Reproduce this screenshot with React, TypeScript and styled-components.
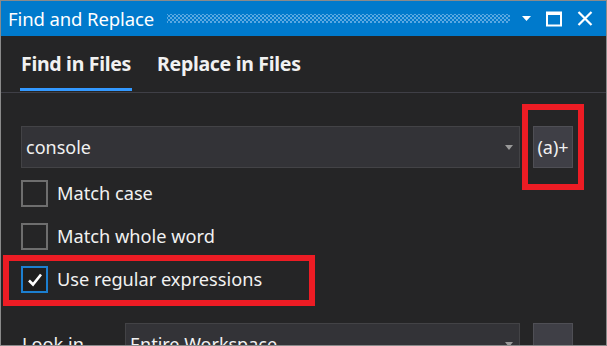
import React from "react"
import styled, { createGlobalStyle } from "styled-components"

const GlobalStyle = createGlobalStyle`
  html, body {
    margin: 0;
    padding: 0;
    background: #252526;
  }
  *, *::before, *::after {
    box-sizing: border-box;
  }
`

const font = `"Noto Sans", "Open Sans", "Liberation Sans", sans-serif`

const App: React.FC = () => {
  return (
    <>
      <GlobalStyle />
      <Window>
        <TitleBar>
          <Title>Find and Replace</Title>
          <Grip />
          <TitleButtons>
            <svg width="9" height="6" viewBox="0 0 9 6">
              <path d="M0 0 L9 0 L4.5 5 Z" fill="#fff" />
            </svg>
            <svg width="16" height="16" viewBox="0 0 16 16">
              <rect x="1" y="1.5" width="14" height="13" fill="none" stroke="#fff" strokeWidth="2" />
              <rect x="1" y="1" width="14" height="3" fill="#fff" />
            </svg>
            <svg width="16" height="15" viewBox="0 0 16 15">
              <path d="M1.5 1 L14.5 14 M14.5 1 L1.5 14" stroke="#fff" strokeWidth="2.2" />
            </svg>
          </TitleButtons>
        </TitleBar>

        <Tabs>
          <Tab active>Find in Files</Tab>
          <Tab>Replace in Files</Tab>
        </Tabs>

        <Body>
          <FieldRow>
            <ComboBox wide>
              <ComboText>console</ComboText>
              <Arrow />
            </ComboBox>
            <SideButton highlighted>(a)+</SideButton>
          </FieldRow>

          <Options>
            <CheckRow>
              <Box />
              <Label>Match case</Label>
            </CheckRow>
            <CheckRow>
              <Box />
              <Label>Match whole word</Label>
            </CheckRow>
            <CheckRow highlighted>
              <Box checked>
                <svg width="16" height="14" viewBox="0 0 16 14">
                  <path d="M2 7.5 L6 11.5 L14 1.5" fill="none" stroke="#fff" strokeWidth="2.6" />
                </svg>
              </Box>
              <Label>Use regular expressions</Label>
            </CheckRow>
          </Options>

          <LookRow>
            <LookLabel>Look in</LookLabel>
            <ComboBox>
              <ComboText>Entire Workspace</ComboText>
              <Arrow />
            </ComboBox>
            <SideButton />
          </LookRow>
        </Body>
      </Window>
    </>
  )
}

const Window = styled.div`
  width: 607px;
  height: 346px;
  border: 1px solid #8a8a8a;
  background: #252526;
  overflow: hidden;
  font-family: ${font};
`

const TitleBar = styled.div`
  height: 35px;
  background: #007acc;
  display: flex;
  align-items: center;
  padding: 0 13px 0 7px;
  color: #fff;
`

const Title = styled.div`
  font-size: 18.5px;
  letter-spacing: -0.1px;
  white-space: nowrap;
  margin-top: -1px;
`

const Grip = styled.div`
  flex: 1;
  height: 9px;
  margin: 0 12px 0 13px;
  background-image: radial-gradient(circle, #5aa8e2 0.8px, transparent 1.1px),
    radial-gradient(circle, #5aa8e2 0.8px, transparent 1.1px);
  background-size: 4px 4px;
  background-position: 0 0, 2px 2px;
`

const TitleButtons = styled.div`
  display: flex;
  align-items: center;
  gap: 15px;
`

const Tabs = styled.div`
  height: 57px;
  display: flex;
  align-items: flex-end;
  gap: 24px;
  padding: 0 19px;
  border-bottom: 1px solid #3f3f46;
`

const Tab = styled.div<{ active?: boolean }>`
  font-size: 19.5px;
  font-weight: 700;
  color: #f1f1f1;
  padding: 0 1px 11px;
  border-bottom: 3px solid ${(p) => (p.active ? "#3399ff" : "transparent")};
  margin-bottom: 1px;
  letter-spacing: -0.3px;
`

const Body = styled.div`
  padding: 33px 20px 0 20px;
  display: flex;
  flex-direction: column;
`

const FieldRow = styled.div`
  display: flex;
  gap: 13px;
`

const ComboBox = styled.div<{ wide?: boolean }>`
  width: ${(p) => (p.wide ? "499px" : "395px")};
  height: 42px;
  background: #333337;
  border: 1px solid #434346;
  display: flex;
  align-items: center;
  justify-content: space-between;
  padding: 0 6px 0 4px;
`

const ComboText = styled.span`
  font-size: 18px;
  color: #f1f1f1;
  margin-top: -1px;
`

const Arrow = styled.span`
  width: 0;
  height: 0;
  border-left: 4.5px solid transparent;
  border-right: 4.5px solid transparent;
  border-top: 5px solid #999999;
`

const SideButton = styled.div<{ highlighted?: boolean }>`
  position: relative;
  width: 40px;
  height: 42px;
  background: #3f3f46;
  border: 1px solid #4f4f55;
  display: flex;
  align-items: center;
  justify-content: center;
  font-size: 18px;
  color: #f1f1f1;
  &::after {
    content: "";
    display: ${(p) => (p.highlighted ? "block" : "none")};
    position: absolute;
    top: -23px;
    bottom: -23px;
    left: -12px;
    right: -12px;
    border: 6px solid #ed1c24;
  }
`

const Options = styled.div`
  display: flex;
  flex-direction: column;
  gap: 16px;
  margin-top: 12px;
`

const CheckRow = styled.div<{ highlighted?: boolean }>`
  position: relative;
  display: flex;
  align-items: center;
  gap: 9px;
  height: 27px;
  &::after {
    content: "";
    display: ${(p) => (p.highlighted ? "block" : "none")};
    position: absolute;
    top: -11px;
    bottom: -13px;
    left: -18px;
    width: 312px;
    border: 6px solid #ed1c24;
  }
`

const Box = styled.div<{ checked?: boolean }>`
  width: 27px;
  height: 27px;
  border: 2px solid ${(p) => (p.checked ? "#1c7fd0" : "#6e6e6e")};
  background: ${(p) => (p.checked ? "#1e1e1e" : "transparent")};
  display: flex;
  align-items: center;
  justify-content: center;
`

const Label = styled.span`
  font-size: 18.2px;
  color: #f1f1f1;
  margin-top: -1px;
`

const LookRow = styled.div`
  display: flex;
  align-items: flex-start;
  margin-top: 30px;
  gap: 13px;
`

const LookLabel = styled.span`
  width: 91px;
  font-size: 18.2px;
  color: #f1f1f1;
  padding: 9px 0 0 1px;
`

export default App
